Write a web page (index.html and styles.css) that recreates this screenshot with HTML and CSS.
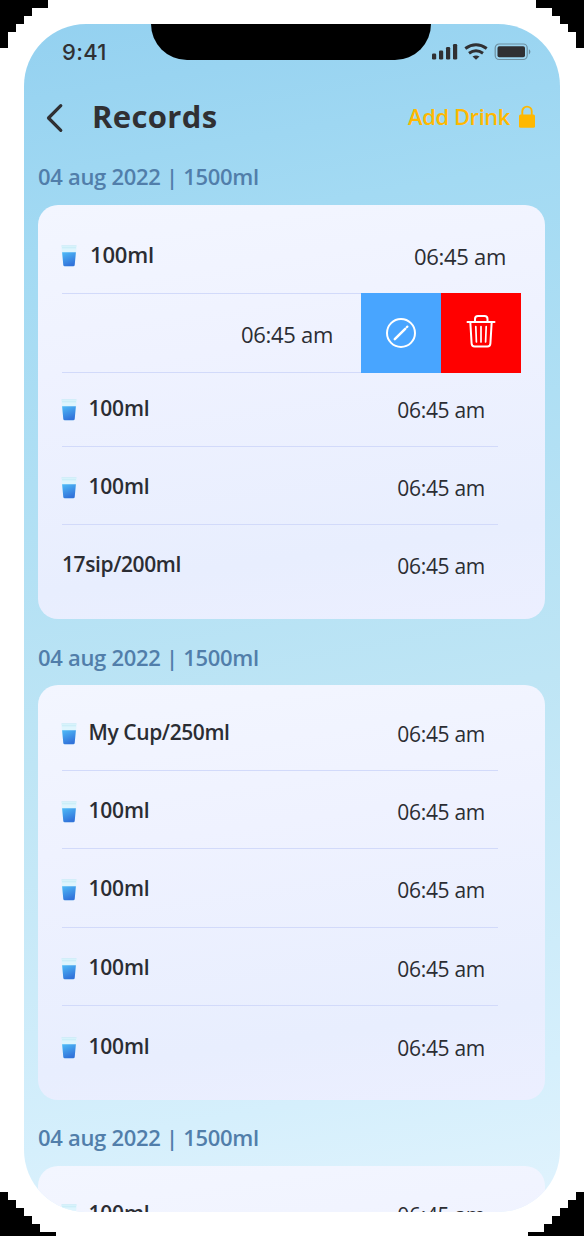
FILE: index.html
```html
<!DOCTYPE html>
<html lang="en">
<head>
<meta charset="utf-8">
<title>Records</title>
<link rel="stylesheet" href="styles.css">
</head>
<body>
<svg class="defs" aria-hidden="true">
  <defs>
    <linearGradient id="water" x1="0" y1="0" x2=".4" y2="1"><stop offset="0" stop-color="#4fbcf8"/><stop offset="1" stop-color="#3273da"/></linearGradient>
    <symbol id="cup" viewBox="0 0 16 23" preserveAspectRatio="none">
      <path d="M.3.800h15.400L14 21q-.1 1.500-1.900 1.500H3.900Q2.100 22.500 2 21z" fill="#def5fd"/>
      <path d="M.5.800h15M1 2.900h14" stroke="#b5e6f1" stroke-width=".6" fill="none"/>
      <path d="M1.100 7.500h13.800L13.700 21q-.1 1.300-1.500 1.300H3.800Q2.400 22.300 2.300 21z" fill="url(#water)"/>
    </symbol>
  </defs>
</svg>
<div class="frame">
  <main class="screen">
    <div class="notch"></div>
    <div class="status">
      <span class="clock">9:41</span>
      <svg class="indicators" width="100" height="18" viewBox="0 0 100 18">
        <g fill="#303033"><rect x="1" y="10.500" width="4.200" height="6" rx="1.300"/><rect x="8" y="7.500" width="4.200" height="9" rx="1.300"/><rect x="15" y="4" width="4.200" height="12.500" rx="1.300"/><rect x="22" y="1" width="4.200" height="15.500" rx="1.300"/></g>
        <g fill="none" stroke="#303033" stroke-width="3"><path d="M34.300 5.500q10.700-7.600 21.400 0"/><path d="M38 10.200q7-5 14 0"/></g>
        <path d="M41.500 13.600q3.500-2.200 7 0L45 16.800z" fill="#303033"/>
        <rect x="64.200" y="1" width="32" height="15.500" rx="4" fill="none" stroke="#303033" stroke-opacity=".42" stroke-width="1.200"/>
        <rect x="66.500" y="3.200" width="27.500" height="11" rx="1.800" fill="#303033"/>
        <path d="M97.900 6.200q1.500.9 1.500 2.600t-1.500 2.600z" fill="#303033" opacity=".45"/>
      </svg>
    </div>
    <header class="header">
      <svg class="back" width="20" height="30" viewBox="0 0 20 30"><path d="M15.800 2.700 3.500 15l12.300 12.300" fill="none" stroke="#303033" stroke-width="3.200" stroke-linecap="round" stroke-linejoin="round"/></svg>
      <h1 class="title">Records</h1>
      <span class="add">Add Drink</span>
      <svg class="lock" width="18" height="24" viewBox="0 0 18 24"><path d="M4.300 10V6.300a4.700 4.700 0 0 1 9.400 0V10" fill="none" stroke="#ffb800" stroke-width="1.900"/><rect x="1" y="9.500" width="16" height="13.300" rx="1.500" fill="#ffb800"/></svg>
    </header>

    <h2 class="day">04 aug 2022 | 1500ml</h2>
    <section class="card">
      <div class="row lead"><svg class="cup"><use href="#cup"/></svg><span class="name">100ml</span><span class="time">06:45 am</span></div>
      <div class="row swiped">
        <span class="time">06:45 am</span>
        <div class="edit"><svg width="32" height="32" viewBox="0 0 32 32"><circle cx="16" cy="16" r="14" fill="none" stroke="#fff" stroke-width="2"/><path d="m9.800 22.200 10.400-10.400" stroke="#fff" stroke-width="2.500" stroke-linecap="round"/><path d="m21.700 10.300.7-.7" stroke="#fff" stroke-width="2.200" stroke-linecap="round"/></svg></div>
        <div class="delete"><svg width="30" height="34" viewBox="0 0 30 34" fill="none" stroke="#fff" stroke-width="2"><path d="M1.500 8h27M9 7.500V5q0-3 3-3h6.500q3 0 3 3v2.500M4.300 8l1.300 21.500q.2 3 3 3h12.800q2.800 0 3-3L25.700 8" stroke-linecap="round"/><path d="m9.800 12.500.6 15.500M15 12.500V28m5.200-15.500-.6 15.500" stroke-width="1.700" stroke-linecap="round"/></svg></div>
      </div>
      <div class="row short"><svg class="cup"><use href="#cup"/></svg><span class="name">100ml</span><span class="time">06:45 am</span></div>
      <div class="row"><svg class="cup"><use href="#cup"/></svg><span class="name">100ml</span><span class="time">06:45 am</span></div>
      <div class="row last"><span class="name wide">17sip/200ml</span><span class="time">06:45 am</span></div>
    </section>

    <h2 class="day">04 aug 2022 | 1500ml</h2>
    <section class="card">
      <div class="row first"><svg class="cup"><use href="#cup"/></svg><span class="name wide">My Cup/250ml</span><span class="time">06:45 am</span></div>
      <div class="row"><svg class="cup"><use href="#cup"/></svg><span class="name">100ml</span><span class="time">06:45 am</span></div>
      <div class="row"><svg class="cup"><use href="#cup"/></svg><span class="name">100ml</span><span class="time">06:45 am</span></div>
      <div class="row"><svg class="cup"><use href="#cup"/></svg><span class="name">100ml</span><span class="time">06:45 am</span></div>
      <div class="row last"><svg class="cup"><use href="#cup"/></svg><span class="name">100ml</span><span class="time">06:45 am</span></div>
    </section>

    <h2 class="day">04 aug 2022 | 1500ml</h2>
    <section class="card">
      <div class="row first"><svg class="cup"><use href="#cup"/></svg><span class="name">100ml</span><span class="time">06:45 am</span></div>
    </section>
  </main>
</div>
</body>
</html>
```
FILE: styles.css
```css
* { box-sizing: border-box; }
body { margin: 0; background: #000; overflow: hidden; font-family: "Open Sans", "Noto Sans", sans-serif; color: #2b2d33; }
svg { display: block; flex: none; }
.defs { position: absolute; width: 0; height: 0; }
.frame {
  width: 584px; height: 1236px; padding: 24px; background: #fff;
  clip-path: polygon(48px 0, 536px 0, 536px 8px, 552px 8px, 552px 16px, 560px 16px, 560px 24px, 568px 24px, 568px 32px, 576px 32px, 576px 48px, 584px 48px,
    584px 1192px, 576px 1192px, 576px 1200px, 568px 1200px, 568px 1208px, 560px 1208px, 560px 1216px, 552px 1216px, 552px 1224px, 544px 1224px, 544px 1232px, 528px 1232px, 528px 1236px,
    56px 1236px, 56px 1232px, 40px 1232px, 40px 1224px, 32px 1224px, 32px 1216px, 24px 1216px, 24px 1208px, 16px 1208px, 16px 1200px, 8px 1200px, 8px 1192px, 0 1192px,
    0 48px, 8px 48px, 8px 32px, 16px 32px, 16px 24px, 24px 24px, 24px 16px, 32px 16px, 32px 8px, 48px 8px);
}
.screen { position: relative; width: 536px; height: 1188px; padding: 0 15.500px 0 14px; overflow: hidden; border-radius: 62px; background: linear-gradient(170deg, #94d1f0 0%, #a3daf3 18%, #bee5f5 58%, #d5effc 88%, #e1f3fd 100%); }
.notch { position: absolute; left: 127px; top: 0; width: 280px; height: 36px; background: #000; border-radius: 0 0 37px 37px; }
.status { display: flex; height: 56px; align-items: center; justify-content: space-between; padding: 0 13.500px 0 24px; }
.clock { font: 500 22px/28px Inter, sans-serif; letter-spacing: .3px; color: #303033; }
.header { display: flex; height: 74px; align-items: center; padding: 0 8.500px 0 7px; }
.back { margin-top: 2px; }
.title { margin: -3px auto 0 27px; font: 700 31px/40px "Open Sans", sans-serif; letter-spacing: .35px; color: #303033; }
.add { margin-top: -2px; color: #ffb800; font-size: 22px; font-weight: 600; line-height: 30px; letter-spacing: -.45px; }
.lock { margin-left: 8px; }
.day { margin: 0; height: 50.500px; font-size: 22px; font-weight: 600; line-height: 45px; letter-spacing: -.3px; color: #517eaa; white-space: nowrap; }
.card { height: 414.500px; margin-bottom: 15.500px; padding: 0 24px; border-radius: 20px; background: linear-gradient(172deg, #f3f6ff, #eff2ff 35%, #e8eefe 80%, #ecefff); overflow: hidden; }
.row { display: flex; align-items: center; height: 78.300px; width: 436px; border-bottom: 1.500px solid #d2dafa; }
.cup { width: 16px; height: 22px; margin: 5px 11.500px 0 -1px; }
.name { font-size: 21px; line-height: 28px; font-weight: 600; letter-spacing: -.2px; margin-top: 1px; }
.wide { letter-spacing: -.4px; }
.time { font-size: 21px; line-height: 28px; font-weight: 400; margin: 5px 13px 0 auto; letter-spacing: -.3px; }
.first { height: 86px; padding-top: 8px; }
.lead { height: 89.500px; width: 459px; padding-top: 9px; }
.lead .cup { margin-right: 13px; }
.lead .name { font-size: 22px; }
.lead .time { margin-right: 15px; font-size: 22px; }
.swiped { width: 459px; height: 79px; }
.swiped .time { margin: 2px 28px 0 auto; font-size: 22px; }
.edit, .delete { display: flex; align-items: center; justify-content: center; width: 80px; height: 80px; background: #48a5ff; }
.delete { background: #f00; padding-bottom: 4px; }
.short { height: 73.500px; padding-bottom: 3px; }
.last { border: 0; }
```
